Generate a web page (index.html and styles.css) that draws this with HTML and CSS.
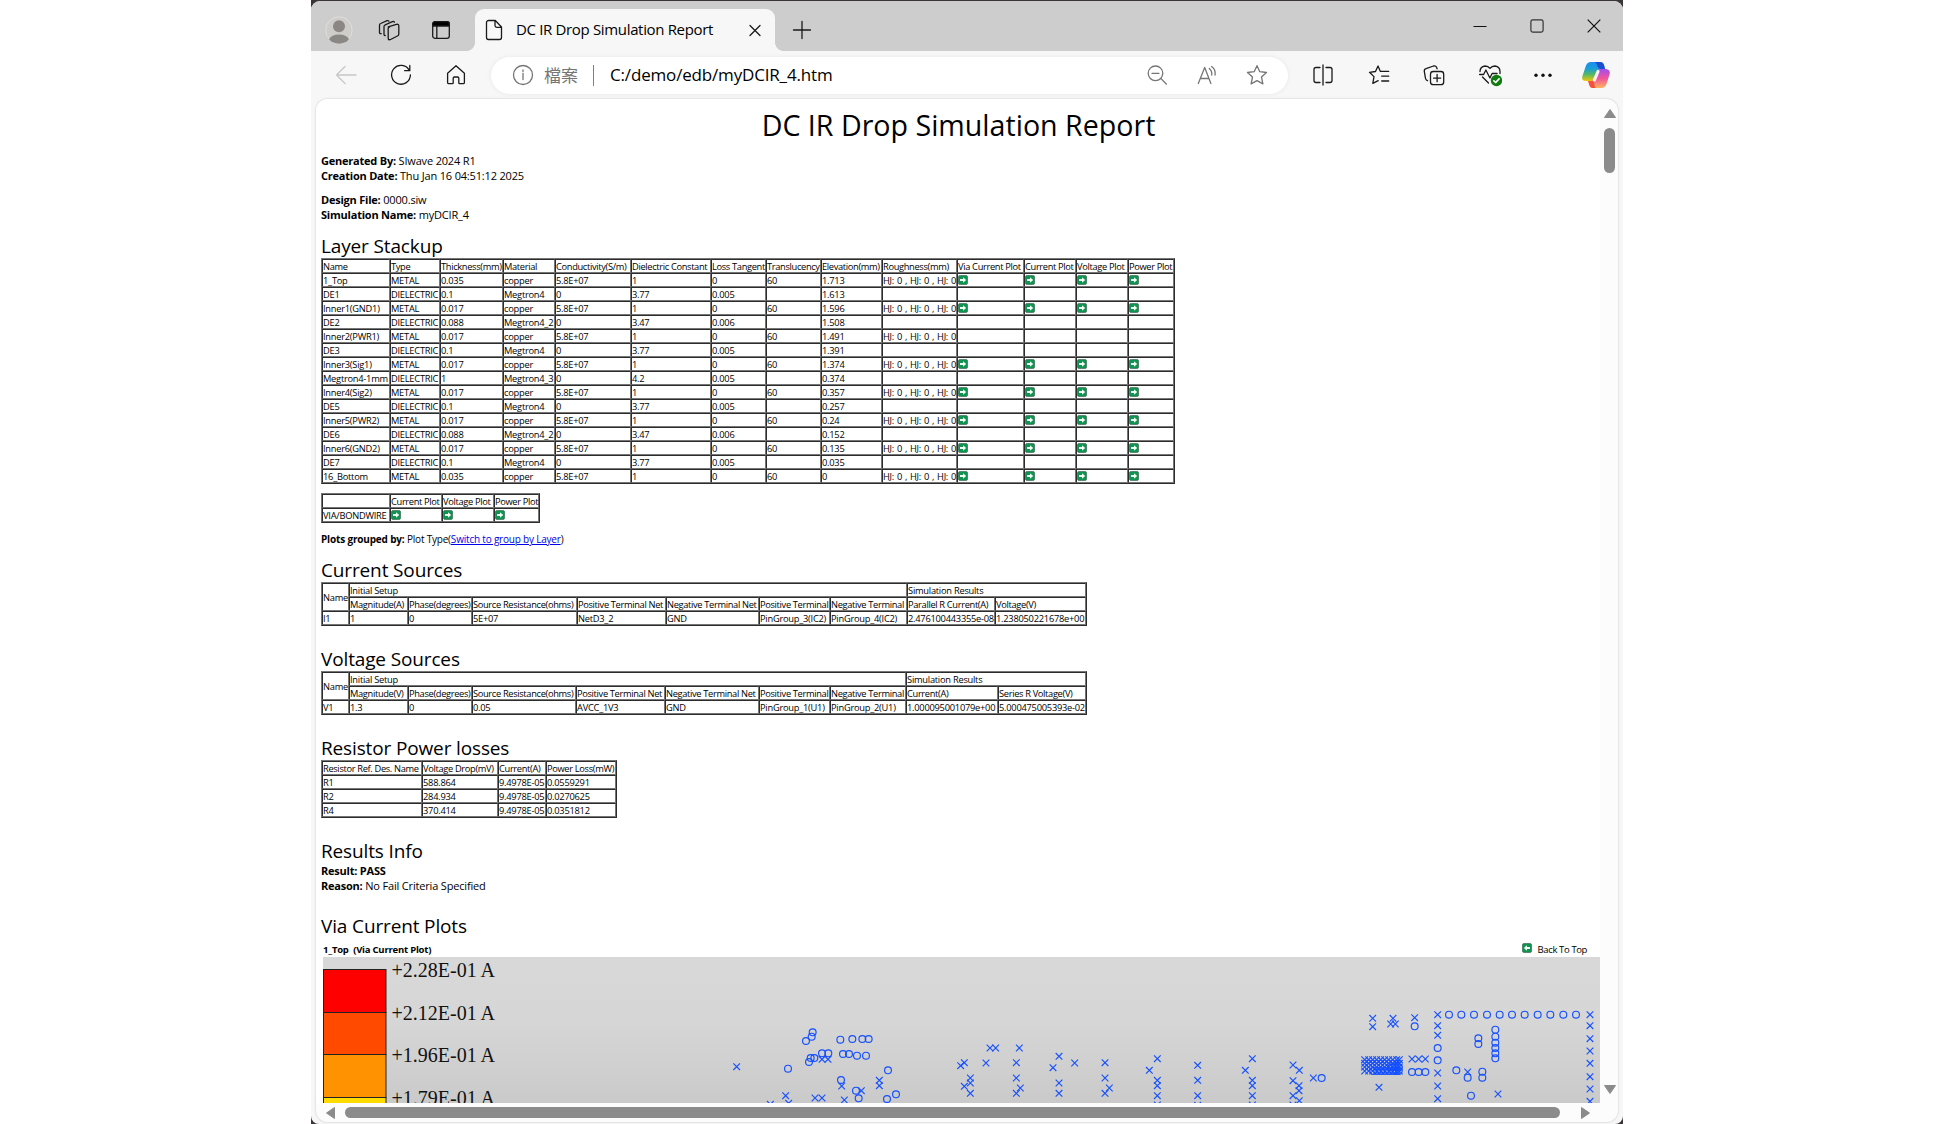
FILE: index.html
```html
<!DOCTYPE html>
<html lang="zh-Hant">
<head>
<meta charset="utf-8">
<title>DC IR Drop Simulation Report</title>
<link rel="stylesheet" href="styles.css">
</head>
<body>
<svg class="defs" aria-hidden="true">
  <defs>
    <symbol id="go" viewBox="0 0 10 10"><rect x=".4" y=".4" width="9.2" height="9.2" rx="1.8" fill="#0d9450" stroke="#42715a" stroke-width=".8"/><path d="M2 4h3V2.3L8.2 5 5 7.7V6H2z" fill="#f2fff6"/></symbol>
    <symbol id="back" viewBox="0 0 10 10"><rect x=".4" y=".4" width="9.2" height="9.2" rx="1.8" fill="#0d9450" stroke="#42715a" stroke-width=".8"/><path d="M8 4H5V2.3L1.8 5 5 7.7V6h3z" fill="#f2fff6"/></symbol>
    <marker id="x" markerUnits="userSpaceOnUse" markerWidth="26" markerHeight="26" refX="13" refY="13"><path d="M3 3 23 23M23 3 3 23" stroke="#1450ff" stroke-width="3.3" fill="none"/></marker>
    <marker id="o" markerUnits="userSpaceOnUse" markerWidth="28" markerHeight="28" refX="14" refY="14"><circle cx="14" cy="14" r="10.3" stroke="#1450ff" stroke-width="3.5" fill="none"/></marker>
    <linearGradient id="cpA" x1="0" y1="0" x2="0" y2="1"><stop offset="0" stop-color="#1c8cf0"/><stop offset=".35" stop-color="#1b9fd8"/><stop offset=".65" stop-color="#57b865"/><stop offset="1" stop-color="#f5c800"/></linearGradient>
    <linearGradient id="cpB" x1="0" y1="0" x2="0" y2="1"><stop offset="0" stop-color="#a44cf0"/><stop offset=".5" stop-color="#f0569a"/><stop offset="1" stop-color="#ffb35a"/></linearGradient>
    <linearGradient id="plotBg" x1="0" y1="0" x2="0" y2="1"><stop offset="0" stop-color="#d8d8d8"/><stop offset=".45" stop-color="#d6d6d6"/><stop offset="1" stop-color="#cacaca"/></linearGradient>
  </defs>
</svg>

<div class="frame">
<div class="window">
  <header class="titlebar">
    <svg class="avatar" viewBox="0 0 28 28"><circle cx="14" cy="14" r="13.2" fill="#cfcdca" stroke="#e0deda"/><circle cx="14" cy="10.3" r="6" fill="#8b8784"/><path d="M4 23.2a10.6 7.2 0 0 1 20 0 13.5 13.5 0 0 1-20 0z" fill="#8b8784"/></svg>
    <svg class="ico workspaces" viewBox="0 0 24 24"><path d="M11.2 8.9 19.4 6.4q2.4-.6 2.4 1.5V16q0 1.6-1.4 2l-6.8 3.5q-2.4.9-2.4-1.3V10.600q0-1.300 1.400-1.700z M8.200 17.500q-1.200.200-1.200-1.200V8.600q0-1.300 1.200-1.800L15.400 3.600q1.300-.5 2 .6M4.200 15.600q-1.700.400-1.700-1.100V7.200q0-1.300 1.200-1.700l6.300-2.800q1.200-.4 1.900.5"/></svg>
    <svg class="ico sidetabs" viewBox="0 0 24 24"><rect x="3.700" y="3.700" width="16.600" height="16.600" rx="2.400"/><path d="M3.700 8V6a2.300 2.300 0 0 1 2.300-2.300h12A2.300 2.300 0 0 1 20.300 6v2z" fill="#000"/><path d="M7.800 8v12"/></svg>
    <div class="tab">
      <svg class="ico" viewBox="0 0 24 24"><path d="M6.500 2.500h6.800L19.500 9v10.500a2 2 0 0 1-2 2h-11a2 2 0 0 1-2-2v-15a2 2 0 0 1 2-2zM13 2.700V7.500a1.800 1.800 0 0 0 1.800 1.800h4.700"/></svg>
      <span class="tab-title">DC IR Drop Simulation Report</span>
      <svg class="ico" viewBox="0 0 24 24"><path d="M7 7.500l10 10M17 7.500l-10 10"/></svg>
    </div>
    <svg class="ico plus" viewBox="0 0 24 24"><path d="M12 3.500v17M3.500 12h17"/></svg>
    <div class="controls">
      <svg viewBox="0 0 14 14"><path d="M.5 7.500h13"/></svg>
      <svg viewBox="0 0 14 14"><rect x=".9" y=".9" width="12.200" height="12.200" rx="1.800" stroke="#333"/></svg>
      <svg viewBox="0 0 14 14"><path d="M.7.700l12.600 12.600M13.300.700.7 13.300"/></svg>
    </div>
  </header>

  <div class="toolbar">
    <svg class="ico dim" viewBox="0 0 24 24"><path d="M22 12H2.500M11 3.500 2.500 12l8.500 8.500"/></svg>
    <svg class="ico reload" viewBox="0 0 24 24"><path d="M20.200 7.200A9.400 9.400 0 1 0 21.400 12M20.800 2.500v5.200h-5.200"/></svg>
    <svg class="ico home" viewBox="0 0 24 24"><path d="M12 2.800 3.600 10.200v9.300q0 1.200 1.200 1.200h3.600q.8 0 .8-.8v-4.700q0-1.200 1.200-1.200h3.200q1.200 0 1.200 1.200v4.700q0 .8.8.8h3.600q1.200 0 1.200-1.200v-9.300z"/></svg>
    <div class="address">
      <svg class="ico gray" viewBox="0 0 24 24"><circle cx="12" cy="12" r="9.500"/><path d="M12 10.500v6M12 7v1.600"/></svg>
      <span class="scheme">檔案</span>
      <span class="bar"></span>
      <span class="url">C:/demo/edb/myDCIR_4.htm</span>
      <svg class="ico gray" viewBox="0 0 24 24"><circle cx="10.500" cy="10.300" r="7.300"/><path d="M16 15.600l5.300 5.400M7 10.300h7"/></svg>
      <svg class="ico gray read" viewBox="0 0 24 24"><path d="M2.300 20.500 8.700 4.500l6.200 16M4.500 15.500h8.400M13.300 5.500q3 2.500 2.400 6.500M15.600 3.500q4.300 3 3.500 8.500"/></svg>
      <svg class="ico gray" viewBox="0 0 24 24"><path d="M12 2.700l2.800 6 6.700.8-5 4.500 1.400 6.900L12 17.600 6.100 20.900l1.400-6.900-5-4.500 6.700-.8z"/></svg>
    </div>
    <svg class="ico split" viewBox="0 0 24 24"><path d="M9 4.500H5a2 2 0 0 0-2 2v11a2 2 0 0 0 2 2h4M15 4.500h4a2 2 0 0 1 2 2v11a2 2 0 0 1-2 2h-4M12 2v20"/></svg>
    <svg class="ico favs" viewBox="0 0 24 24"><path d="M13.300 8.200 11 3l-2.500 5.500-6 .8 4.500 4.300-1.200 6.700 5.400-2.600M13.700 8.400h8M14.700 13.200h7M14.700 18h7"/></svg>
    <svg class="ico colls" viewBox="0 0 24 24"><rect x="8.500" y="8.500" width="13.200" height="13.200" rx="2.800"/><path d="M15.100 11.500v7.200M11.500 15.100h7.200M5.500 17.700q-1.600-.6-2-2.300L2.300 8.300q-.3-2 1.700-2.600L11.500 3q2.300-.6 3 1.200l.6 1.600"/></svg>
    <svg class="ico heart" viewBox="0 0 24 24"><path d="M1.600 11.500h4l2.300-4.500 4 8 2.200-4.500h5M2 8.600q0-5 5-5.600 3.200 0 5 2.300Q13.800 3 17 3q5 .6 5 5.600v2M4.500 14l6 6"/><circle cx="18.500" cy="17.500" r="5.700" fill="#107c10" stroke="none"/><path d="M15.900 17.800l1.800 1.700 3.400-3.600" stroke="#fff" stroke-width="1.700"/></svg>
    <svg class="ico more" viewBox="0 0 24 24"><g fill="#111" stroke="none"><circle cx="5" cy="12.200" r="1.700"/><circle cx="12" cy="12.200" r="1.700"/><circle cx="19" cy="12.200" r="1.700"/></g></svg>
    <svg class="copilot" viewBox="0 0 28 28"><path d="M12 1h6q3 0 4 3l1 4h-4q-2.500 0-3.300 2.500L13.500 17Q12 21 9 20H4Q-.8 20 .3 15.500L3.800 5Q5.200 1 9 1z" fill="url(#cpA)"/><path d="M12 1h6q3 0 4 3l1 4h-4.500q-2 0-3-2.500Q14.500 1 12 1z" fill="#1c4fd0"/><path d="M16 27h-6q-2 0-2.700-3L6.200 20H9q2.500 0 3.300-2.500L14.500 11Q16 7.500 19 8h5q4.500.5 3.700 5L24.500 23q-1.500 4-5 4z" fill="url(#cpB)"/><path d="M6.200 20H9q2.200 0 3.100 1.500Q12.300 25 13.500 27H10q-2 0-2.700-3z" fill="#f4503c"/><path d="M16 10.500 12.500 18.800" stroke="#fbeef4" stroke-width="3.200" stroke-linecap="round"/></svg>
  </div>

  <div class="viewport">
    <main class="page">
      <h1>DC IR Drop Simulation Report</h1>
      <p class="meta"><b>Generated By:</b> SIwave 2024 R1<br><b>Creation Date:</b> Thu Jan 16 04:51:12 2025</p>
      <p class="meta design"><b>Design File:</b> 0000.siw<br><b>Simulation Name:</b> myDCIR_4</p>

      <h2>Layer Stackup</h2>
      <table class="stackup">
        <colgroup><col class="w68"><col class="w50"><col class="w63"><col class="w52"><col class="w76"><col class="w80"><col class="w55"><col class="w55"><col class="w61"><col class="w75"><col class="w67"><col class="w52"><col class="w52"><col class="w46"></colgroup>
        <tr class="head"><td>Name<td>Type<td>Thickness(mm)<td>Material<td>Conductivity(S/m)<td>Dielectric Constant<td>Loss Tangent<td>Translucency<td>Elevation(mm)<td>Roughness(mm)<td>Via Current Plot<td>Current Plot<td>Voltage Plot<td>Power Plot</tr>
        <tr><td>1_Top<td>METAL<td>0.035<td>copper<td>5.8E+07<td>1<td>0<td>60<td>1.713<td>HJ: 0 , HJ: 0 , HJ: 0<td><svg class="go"><use href="#go"/></svg><td><svg class="go"><use href="#go"/></svg><td><svg class="go"><use href="#go"/></svg><td><svg class="go"><use href="#go"/></svg></tr>
        <tr><td>DE1<td>DIELECTRIC<td>0.1<td>Megtron4<td>0<td>3.77<td>0.005<td><td>1.613<td><td><td><td><td></tr>
        <tr><td>Inner1(GND1)<td>METAL<td>0.017<td>copper<td>5.8E+07<td>1<td>0<td>60<td>1.596<td>HJ: 0 , HJ: 0 , HJ: 0<td><svg class="go"><use href="#go"/></svg><td><svg class="go"><use href="#go"/></svg><td><svg class="go"><use href="#go"/></svg><td><svg class="go"><use href="#go"/></svg></tr>
        <tr><td>DE2<td>DIELECTRIC<td>0.088<td>Megtron4_2<td>0<td>3.47<td>0.006<td><td>1.508<td><td><td><td><td></tr>
        <tr><td>Inner2(PWR1)<td>METAL<td>0.017<td>copper<td>5.8E+07<td>1<td>0<td>60<td>1.491<td>HJ: 0 , HJ: 0 , HJ: 0<td><td><td><td></tr>
        <tr><td>DE3<td>DIELECTRIC<td>0.1<td>Megtron4<td>0<td>3.77<td>0.005<td><td>1.391<td><td><td><td><td></tr>
        <tr><td>Inner3(Sig1)<td>METAL<td>0.017<td>copper<td>5.8E+07<td>1<td>0<td>60<td>1.374<td>HJ: 0 , HJ: 0 , HJ: 0<td><svg class="go"><use href="#go"/></svg><td><svg class="go"><use href="#go"/></svg><td><svg class="go"><use href="#go"/></svg><td><svg class="go"><use href="#go"/></svg></tr>
        <tr><td>Megtron4-1mm<td>DIELECTRIC<td>1<td>Megtron4_3<td>0<td>4.2<td>0.005<td><td>0.374<td><td><td><td><td></tr>
        <tr><td>Inner4(Sig2)<td>METAL<td>0.017<td>copper<td>5.8E+07<td>1<td>0<td>60<td>0.357<td>HJ: 0 , HJ: 0 , HJ: 0<td><svg class="go"><use href="#go"/></svg><td><svg class="go"><use href="#go"/></svg><td><svg class="go"><use href="#go"/></svg><td><svg class="go"><use href="#go"/></svg></tr>
        <tr><td>DE5<td>DIELECTRIC<td>0.1<td>Megtron4<td>0<td>3.77<td>0.005<td><td>0.257<td><td><td><td><td></tr>
        <tr><td>Inner5(PWR2)<td>METAL<td>0.017<td>copper<td>5.8E+07<td>1<td>0<td>60<td>0.24<td>HJ: 0 , HJ: 0 , HJ: 0<td><svg class="go"><use href="#go"/></svg><td><svg class="go"><use href="#go"/></svg><td><svg class="go"><use href="#go"/></svg><td><svg class="go"><use href="#go"/></svg></tr>
        <tr><td>DE6<td>DIELECTRIC<td>0.088<td>Megtron4_2<td>0<td>3.47<td>0.006<td><td>0.152<td><td><td><td><td></tr>
        <tr><td>Inner6(GND2)<td>METAL<td>0.017<td>copper<td>5.8E+07<td>1<td>0<td>60<td>0.135<td>HJ: 0 , HJ: 0 , HJ: 0<td><svg class="go"><use href="#go"/></svg><td><svg class="go"><use href="#go"/></svg><td><svg class="go"><use href="#go"/></svg><td><svg class="go"><use href="#go"/></svg></tr>
        <tr><td>DE7<td>DIELECTRIC<td>0.1<td>Megtron4<td>0<td>3.77<td>0.005<td><td>0.035<td><td><td><td><td></tr>
        <tr><td>16_Bottom<td>METAL<td>0.035<td>copper<td>5.8E+07<td>1<td>0<td>60<td>0<td>HJ: 0 , HJ: 0 , HJ: 0<td><svg class="go"><use href="#go"/></svg><td><svg class="go"><use href="#go"/></svg><td><svg class="go"><use href="#go"/></svg><td><svg class="go"><use href="#go"/></svg></tr>
      </table>

      <table class="vias">
        <colgroup><col class="w68"><col class="w52"><col class="w52"><col class="w45"></colgroup>
        <tr class="head"><td><td>Current Plot<td>Voltage Plot<td>Power Plot</tr>
        <tr><td>VIA/BONDWIRE<td><svg class="go"><use href="#go"/></svg><td><svg class="go"><use href="#go"/></svg><td><svg class="go"><use href="#go"/></svg></tr>
      </table>
      <p class="grouping"><b>Plots grouped by:</b> Plot Type(<a href="#">Switch to group by Layer</a>)</p>

      <h2>Current Sources</h2>
      <table class="sources">
        <colgroup><col class="w27"><col class="w59"><col class="w64"><col class="w105"><col class="w89"><col class="w93"><col class="w71"><col class="w77"><col class="w88"><col class="w91"></colgroup>
        <tr><td rowspan="2">Name<td colspan="7">Initial Setup<td colspan="2">Simulation Results</tr>
        <tr class="head"><td>Magnitude(A)<td>Phase(degrees)<td>Source Resistance(ohms)<td>Positive Terminal Net<td>Negative Terminal Net<td>Positive Terminal<td>Negative Terminal<td>Parallel R Current(A)<td>Voltage(V)</tr>
        <tr><td>I1<td>1<td>0<td>5E+07<td>NetD3_2<td>GND<td>PinGroup_3(IC2)<td>PinGroup_4(IC2)<td>2.476100443355e-08<td>1.238050221678e+00</tr>
      </table>

      <h2 class="next">Voltage Sources</h2>
      <table class="sources">
        <colgroup><col class="w27"><col class="w59"><col class="w64"><col class="w104"><col class="w89"><col class="w94"><col class="w71"><col class="w76"><col class="w92"><col class="w88"></colgroup>
        <tr><td rowspan="2">Name<td colspan="7">Initial Setup<td colspan="2">Simulation Results</tr>
        <tr class="head"><td>Magnitude(V)<td>Phase(degrees)<td>Source Resistance(ohms)<td>Positive Terminal Net<td>Negative Terminal Net<td>Positive Terminal<td>Negative Terminal<td>Current(A)<td>Series R Voltage(V)</tr>
        <tr><td>V1<td>1.3<td>0<td>0.05<td>AVCC_1V3<td>GND<td>PinGroup_1(U1)<td>PinGroup_2(U1)<td>1.000095001079e+00<td>5.000475005393e-02</tr>
      </table>

      <h2 class="next">Resistor Power losses</h2>
      <table class="losses">
        <colgroup><col class="w100"><col class="w76"><col class="w48"><col class="w70"></colgroup>
        <tr class="head"><td>Resistor Ref. Des. Name<td>Voltage Drop(mV)<td>Current(A)<td>Power Loss(mW)</tr>
        <tr><td>R1<td>588.864<td>9.4978E-05<td>0.0559291</tr>
        <tr><td>R2<td>284.934<td>9.4978E-05<td>0.0270625</tr>
        <tr><td>R4<td>370.414<td>9.4978E-05<td>0.0351812</tr>
      </table>

      <h2 class="next">Results Info</h2>
      <p class="meta"><b>Result: PASS</b><br><b>Reason:</b> No Fail Criteria Specified</p>

      <h2 class="next">Via Current Plots</h2>
      <div class="caption">
        <b>1_Top&nbsp; (Via Current Plot)</b>
        <span class="totop"><svg class="go"><use href="#back"/></svg>Back To Top</span>
      </div>
      <svg class="plot" viewBox="0 0 1277 146">
        <rect width="1277" height="146" fill="url(#plotBg)"/>
        <g stroke="#222" stroke-width="1">
          <rect x=".5" y="12.500" width="62.500" height="43" fill="#f00"/>
          <rect x=".5" y="55.500" width="62.500" height="42" fill="#ff4a00"/>
          <rect x=".5" y="97.500" width="62.500" height="43" fill="#ff9200"/>
          <rect x=".5" y="140.500" width="62.500" height="43" fill="#ffdb00"/>
        </g>
        <g class="legend">
          <text x="68.500" y="20">+2.28E-01 A</text><text x="68.500" y="62.500">+2.12E-01 A</text><text x="68.500" y="105">+1.96E-01 A</text><text x="68.500" y="147.500">+1.79E-01 A</text>
        </g>
        <g transform="translate(377 -27) scale(.33333)">
          <polyline class="xs" points="110,410 425,468 433,510 484,482 538,451 538,467 257,497 211,523 266,520 345,504 366,504 366,388 384,388 782,407 793,398 870,354 887,354 958,354 858,399 949,398 811,444 811,459 793,469 811,490 949,444 961,474 949,490 1077,379 1059,413 1124,399 1077,459 1077,490"/>
          <polyline class="os" points="338,307 335,320 318,333 421,329 457,327 487,327 506,327 366,370 385,370 332,384 343,384 327,396 429,372 447,372 471,377 498,377 264,416 564,421 423,450 468,482 476,505 561,507 588,493"/>
        </g>
        <g transform="translate(757 -27) scale(.33333)">
          <polyline class="xs" points="75,398 75,444 88,474 75,490 232,386 208,421 232,451 232,467 232,497 232,525 353,406 353,451 353,497 353,526 517,386 496,421 517,451 517,467 517,497 517,525 639,405 658,421 639,452 657,467 657,482 639,497 658,512 639,525 700,444"/>
          <circle cx="725" cy="444" r="10.300" stroke="#1450ff" stroke-width="3.500" fill="none"/>
        </g>
        <g transform="translate(1017 -27) scale(.33333)">
          <polyline class="xs" points="98,265 98,290 159,265 152,282 166,282 224,263 117,472 216,387 236,387 256,387 293,254 293,287 293,316 293,429 293,468 293,506 383,426 474,492 750,254 750,287 750,326 750,363 750,400 750,440 750,477 750,514"/>
          <polyline class="xs" points="74,389 86,389 98,389 110,389 122,389 134,389 146,389 158,389 170,389 178,389 74,400 86,400 98,400 110,400 122,400 134,400 146,400 158,400 170,400 178,400 74,411 86,411 98,411 110,411 122,411 134,411 146,411 158,411 170,411 178,411 74,423 86,423 98,423 110,423 122,423 134,423 146,423 158,423 170,423 178,423"/>
          <polyline class="os" points="224,289 216,426 236,426 256,426 293,354 293,391 327,254 364,254 402,254 441,254 479,254 516,254 554,254 593,254 631,254 670,254 708,254 466,299 466,320 466,338 466,354 466,370 466,385 415,325 415,342 349,421 383,443 427,425 427,443 393,497"/>
          <polyline class="os" points="100,423 112,423 124,423 136,423 148,423 160,423 168,423 176,423 155,412 166,411 176,412"/>
        </g>
      </svg>
    </main>
    <div class="vscroll">
      <svg viewBox="0 0 12 9"><path d="M6 .5 11.500 8.500H.5z"/></svg>
      <span class="vthumb"></span>
      <svg class="end" viewBox="0 0 12 9"><path d="M6 8.500 11.500.5H.5z"/></svg>
    </div>
    <div class="hscroll">
      <svg viewBox="0 0 9 12"><path d="M.5 6 8.500.5v11z"/></svg>
      <span class="hthumb"></span>
      <svg viewBox="0 0 9 12"><path d="M8.500 6 .5.5v11z"/></svg>
    </div>
  </div>
</div>
</div>
</body>
</html>
```
FILE: styles.css
```css
* { box-sizing: border-box; }
body { margin: 0; height: 1124px; overflow: hidden; background: #fff; color: #000; font-family: "Open Sans", "Noto Sans", "Noto Sans CJK TC", sans-serif; }
.defs { position: absolute; width: 0; height: 0; }
svg { display: block; flex: none; }

/* browser window */
.frame { width: 1312px; height: 1124px; margin-left: 311px; padding-top: 1px; background: #3a3638; }
.window { height: 1123px; border-radius: 9px 9px 8px 8px; background: #f7f7f7; overflow: hidden; }
.ico { width: 24px; height: 24px; fill: none; stroke: #1a1a1a; stroke-width: 1.3; stroke-linecap: round; stroke-linejoin: round; }
.ico.gray { stroke: #757575; }
.ico.dim { stroke: #c8c8c8; }

.titlebar { display: flex; align-items: center; height: 50px; padding: 8px 22px 0 14px; background: #cdcdcd; }
.avatar { width: 28px; height: 28px; }
.workspaces { margin-left: 24px; }
.sidetabs { margin-left: 28px; }
.tab { position: relative; display: flex; align-items: center; width: 300px; height: 42px; margin-left: 22px; padding-left: 7px; border-radius: 9px 9px 0 0; background: #f7f7f7; }
.tab::before, .tab::after { content: ""; position: absolute; bottom: 0; width: 8px; height: 8px; }
.tab::before { right: 100%; background: radial-gradient(circle at 0 0, transparent 7.5px, #f7f7f7 8px); }
.tab::after { left: 100%; background: radial-gradient(circle at 100% 0, transparent 7.5px, #f7f7f7 8px); }
.tab-title { width: 227px; margin-left: 10px; padding-bottom: 2px; font-size: 15px; letter-spacing: -.34px; white-space: nowrap; }
.plus { margin-left: 15px; }
.controls { display: flex; gap: 43px; margin: -9px 0 0 auto; }
.controls svg { width: 14px; height: 14px; fill: none; stroke: #111; stroke-width: 1.2; }

.toolbar { display: flex; align-items: center; height: 48px; padding-left: 23px; }
.reload { margin-left: 31px; }
.home { margin-left: 31px; }
.address { display: flex; align-items: center; width: 797px; height: 37px; margin-left: 23px; padding-left: 20px; border-radius: 19px; background: #fff; box-shadow: 0 0 4px #e6e6e6; }
.scheme { width: 36px; margin-left: 9px; padding-bottom: 2px; font: 17px "Noto Sans CJK TC", sans-serif; color: #757575; white-space: nowrap; }
.bar { width: 1px; height: 21px; margin-left: 13px; background: #808080; }
.url { width: 535px; margin-left: 16px; padding-bottom: 2px; font-size: 17px; letter-spacing: -.17px; white-space: nowrap; }
.read { margin: 0 25px 0 27px; }
.split { margin-left: 23px; }
.favs { margin-left: 32px; }
.colls { margin-left: 31px; }
.heart { margin-left: 32px; }
.more { margin-left: 29px; }
.copilot { width: 28px; height: 28px; margin-left: 27px; }

.viewport { display: grid; grid-template: 1004px 19px / 1284px 18px; width: 1302px; margin-left: 5px; border-radius: 12px; background: #fcfcfc; box-shadow: 0 0 0 1px #e6e6e6, 0 0 3px #ddd; overflow: hidden; }
.page { height: 1004px; padding: 6px 4px 0 5px; background: #fff; overflow: hidden; }

.vscroll { display: flex; flex-direction: column; align-items: center; padding: 10px 0 9px 1px; }
.vscroll svg { width: 12px; height: 9px; fill: #8b8b8b; stroke: #8b8b8b; stroke-linejoin: round; }
.vthumb { width: 11px; height: 45px; margin-top: 10px; border-radius: 6px; background: #8b8b8b; }
.vscroll .end { margin-top: auto; }
.hscroll { display: flex; align-items: center; padding: 0 0 0 10px; }
.hscroll svg { width: 9px; height: 12px; margin-top: 1px; fill: #8b8b8b; stroke: #8b8b8b; stroke-linejoin: round; }
.hthumb { width: 1215px; height: 11px; margin: 0 21px 0 10px; border-radius: 6px; background: #8b8b8b; }

/* report */
h1, h2, p { margin: 0; font-weight: 400; }
h1 { margin-bottom: 8px; font-size: 28.6px; line-height: 40px; text-align: center; }
h2 { font-size: 19px; line-height: 24px; letter-spacing: -.14px; }
h2.next { margin-top: 21px; }
.meta { font-size: 11px; line-height: 15px; letter-spacing: -.17px; }
.meta b { letter-spacing: -.22px; }
.grouping b { letter-spacing: -.17px; }
.design { margin: 9px 0 12px; }
table { table-layout: fixed; border-collapse: separate; border-spacing: 0; border: 1px solid; border-color: #767676 #2c2c2c #2c2c2c #767676; }
td { height: 14px; padding: 1px 0 0; border: 1px solid; border-color: #2c2c2c #767676 #767676 #2c2c2c; font-size: 9.3px; line-height: 11px; letter-spacing: -.25px; white-space: nowrap; }
.head td { letter-spacing: -.34px; }
.go { width: 10px; height: 10px; margin: 0 0 1px; }
.stackup { width: 854px; }
.stackup tr:not(.head) td:nth-child(10) { word-spacing: .75px; }
.vias { width: 219px; margin-top: 9px; }
.sources { width: 766px; }
.losses { width: 296px; }
.grouping { margin: 9px 0 11px; font-size: 10px; line-height: 15px; letter-spacing: -.2px; }
.grouping a { color: #00e; }
.caption { display: flex; justify-content: space-between; padding: 4px 9px 0 2px; font-size: 9.5px; line-height: 15px; letter-spacing: -.22px; white-space: nowrap; }
.totop { display: flex; letter-spacing: -.38px; }
.totop .go { margin: 1px 6px 0 0; }
.plot { width: 1277px; height: 146px; margin-left: 2px; }
.legend { font: 20px "Liberation Serif", serif; fill: #111; }
.xs { fill: none; marker-start: url(#x); marker-mid: url(#x); marker-end: url(#x); }
.os { fill: none; marker-start: url(#o); marker-mid: url(#o); marker-end: url(#o); }

.w27 { width: 27px; } .w45 { width: 45px; } .w46 { width: 46px; } .w48 { width: 48px; } .w50 { width: 50px; }
.w52 { width: 52px; } .w55 { width: 55px; } .w59 { width: 59px; } .w61 { width: 61px; } .w63 { width: 63px; }
.w64 { width: 64px; } .w67 { width: 67px; } .w68 { width: 68px; } .w70 { width: 70px; } .w71 { width: 71px; }
.w75 { width: 75px; } .w76 { width: 76px; } .w77 { width: 77px; } .w80 { width: 80px; } .w88 { width: 88px; }
.w89 { width: 89px; } .w91 { width: 91px; } .w92 { width: 92px; } .w93 { width: 93px; } .w94 { width: 94px; }
.w100 { width: 100px; } .w104 { width: 104px; } .w105 { width: 105px; }
```
